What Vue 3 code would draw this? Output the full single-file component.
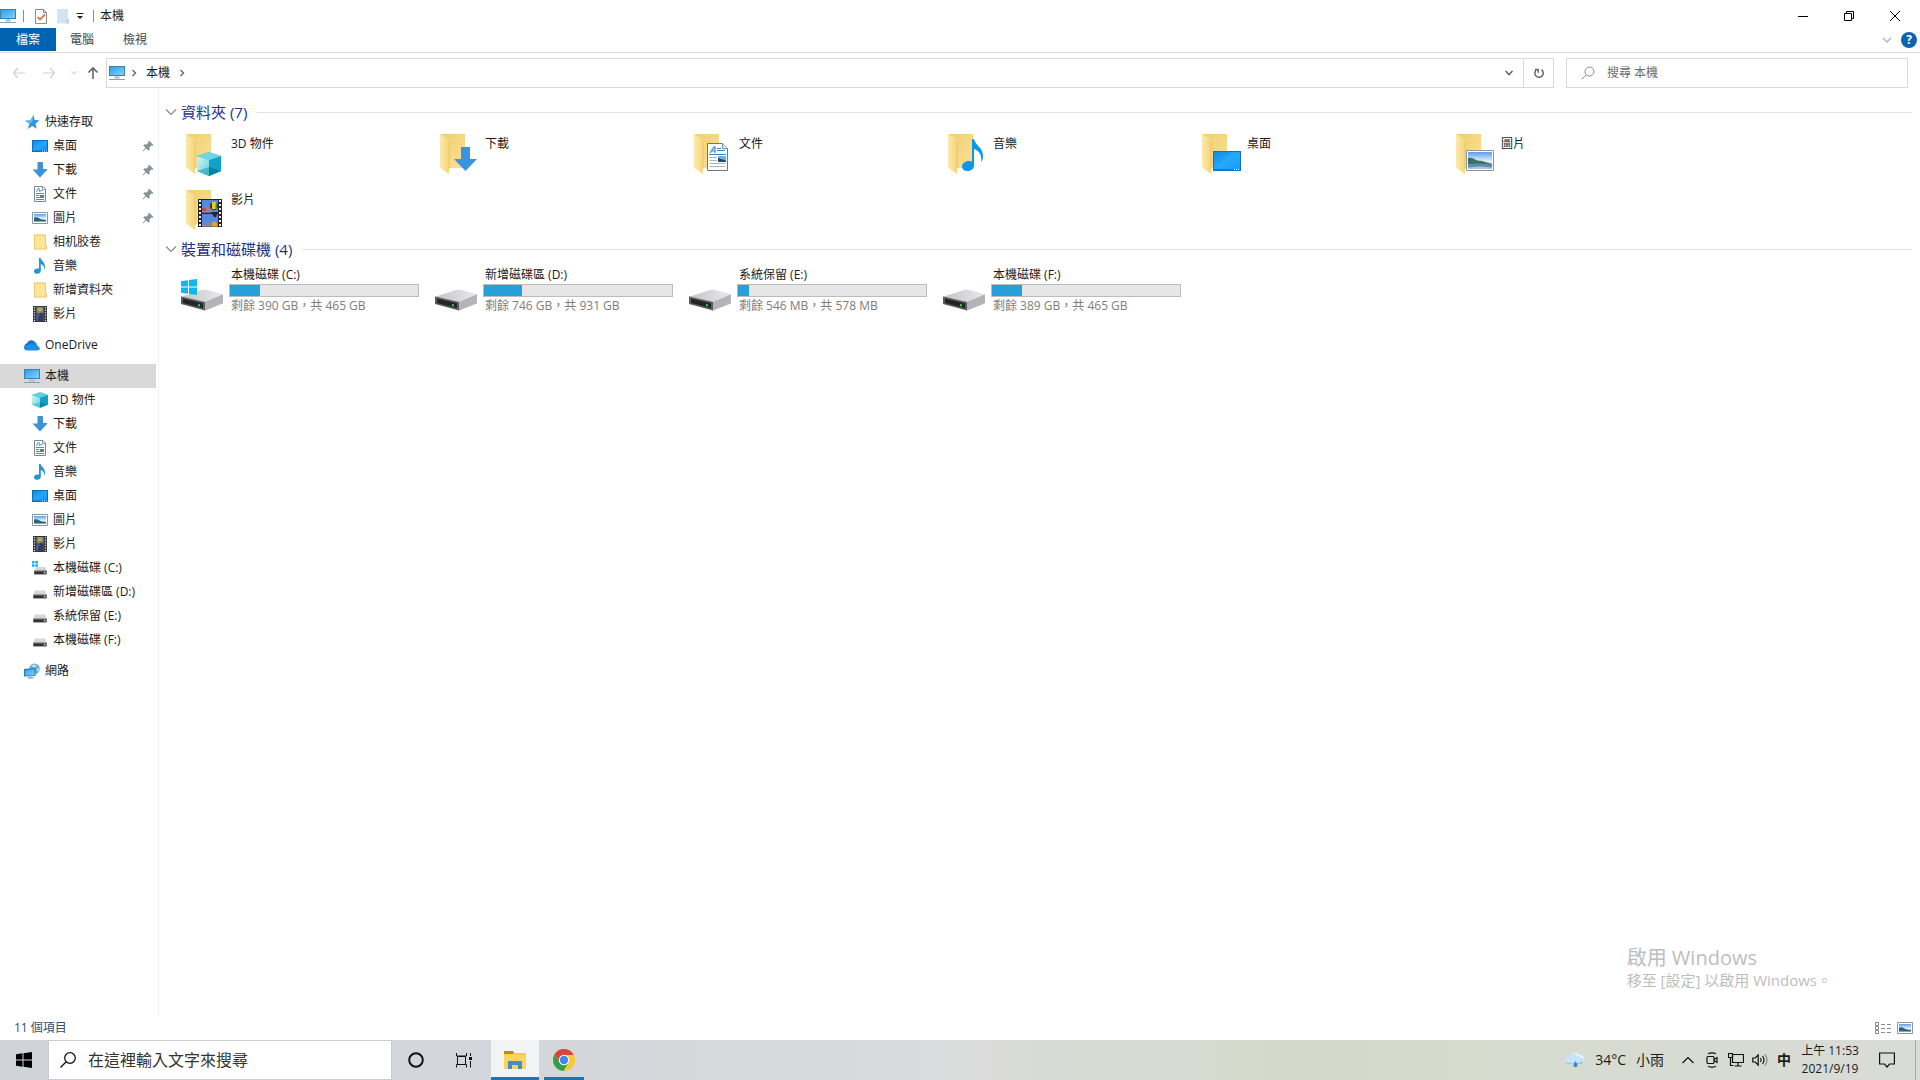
<template>
  <div class="desktop">
    <svg class="sprite" aria-hidden="true">
      <defs>
        <linearGradient id="g-screen" x1="0" y1="0" x2="1" y2="1">
          <stop offset="0" stop-color="#2f9fe8" />
          <stop offset="1" stop-color="#7fd3fb" />
        </linearGradient>
        <linearGradient id="g-desk" x1="0" y1="0" x2="1" y2="1">
          <stop offset="0" stop-color="#1289e6" />
          <stop offset="0.5" stop-color="#22a7fb" />
          <stop offset="1" stop-color="#0d93f2" />
        </linearGradient>
        <linearGradient id="g-folder" x1="0" y1="0" x2="1" y2="1">
          <stop offset="0" stop-color="#f0cf70" />
          <stop offset="1" stop-color="#fce196" />
        </linearGradient>
        <linearGradient id="g-flap" x1="0" y1="0" x2="1" y2="0">
          <stop offset="0" stop-color="#fde9a9" />
          <stop offset="1" stop-color="#f6d67c" />
        </linearGradient>
        <linearGradient id="g-drive" x1="0" y1="0" x2="1" y2="0">
          <stop offset="0" stop-color="#c4c4c6" />
          <stop offset="1" stop-color="#e9e9eb" />
        </linearGradient>
        <linearGradient id="g-sky" x1="0" y1="0" x2="0" y2="1">
          <stop offset="0" stop-color="#5d9ce6" />
          <stop offset="0.55" stop-color="#e3f2fb" />
          <stop offset="1" stop-color="#6d9fb5" />
        </linearGradient>
        <linearGradient id="g-cube" x1="0" y1="0" x2="1" y2="1">
          <stop offset="0" stop-color="#d3f5f5" />
          <stop offset="1" stop-color="#63d2dd" />
        </linearGradient>
        <linearGradient id="g-cloud" x1="0" y1="0" x2="1" y2="1">
          <stop offset="0" stop-color="#0a5cb5" />
          <stop offset="1" stop-color="#2aa6ee" />
        </linearGradient>
      </defs>

      <symbol id="pc" viewBox="0 0 16 16">
        <path d="M0 1h16v10H0z" fill="#3c7fae" />
        <path d="M1 2h14v8H1z" fill="url(#g-screen)" />
        <path d="M6 11h4v2H6z" fill="#b9d4e6" />
        <path d="M0 14h16v1H0z" fill="#8aa0b0" />
        <path d="M5 12.5h6v.8H5z" fill="#7fa9c6" />
      </symbol>
      <symbol id="star" viewBox="0 0 16 16">
        <path d="M9.500 1l1 4.700 5 .8-4 3 1.200 5.200-4.400-2.700-4.600 3 1.800-5L1 6.800l5.400-.5z" fill="#2f96dc" />
        <path d="M9.500 1L6.400 6.300 1 6.800 5.500 10l3-2.500z" fill="#66b9ee" />
      </symbol>
      <symbol id="desktop" viewBox="0 0 16 16">
        <path d="M0 2h16v12H0z" fill="#0c6fb8" />
        <path d="M1 3h14v9.500H1z" fill="url(#g-desk)" />
        <path d="M10 12.500h1v1h-1zM12 12.500h1v1h-1zM14 12.500h1v1h-1z" fill="#d7efff" />
      </symbol>
      <symbol id="download" viewBox="0 0 16 16">
        <path d="M5.500 .5h5v7h5L8 15.500 .5 7.500h5z" fill="#3a93d9" />
        <path d="M5.500 .5h5v7h4.500" fill="none" stroke="#2775b6" stroke-width=".7" />
      </symbol>
      <symbol id="document" viewBox="0 0 16 16">
        <path d="M2.500 .5h8.500l2.500 2.500v12.500h-11z" fill="#fff" stroke="#7c8791" />
        <path d="M10.500 .5v3h3" fill="none" stroke="#7c8791" stroke-width=".8" />
        <path d="M4.500 6l1.500-3.500h1L8 6M8.500 4.500h2M4 7.500h8M4 9.500h3M4 11.500h8M4 13.500h8" fill="none" stroke="#3597cf" />
        <path d="M8 9h4v2H8z" fill="#2b8ac4" />
      </symbol>
      <symbol id="picture" viewBox="0 0 16 16">
        <path d="M.5 2.500h15v11H.5z" fill="#fff" stroke="#8b959d" />
        <path d="M2 4h12v8H2z" fill="url(#g-sky)" />
        <path d="M2 7.500q3-1 5 .8t7 1.700v1H2z" fill="#2f6272" />
      </symbol>
      <symbol id="folder" viewBox="0 0 16 16">
        <path d="M2 .5h12v11h1v4H2z" fill="#f2d47a" />
        <path d="M2.500 1h11v10.500h1V15h-12z" fill="#fbe59a" stroke="#ecca6c" stroke-width=".8" />
      </symbol>
      <symbol id="music" viewBox="0 0 16 16">
        <path d="M7 0h1.600c.5 3 4.700 4 4.400 9.500-.1 1-.4 1.700-.8 2.300.3-3.300-1-5-3.400-5.800v6.800c0 1.700-1.700 3-3.600 3S2 14.700 2 13.200s1.600-2.700 3.300-2.700c.7 0 1.300.1 1.700.3z" fill="#1f96d6" />
      </symbol>
      <symbol id="video" viewBox="0 0 16 16">
        <path d="M1 0h14v16H1z" fill="#34343a" />
        <path d="M4.500 1h7v6.500h-7z" fill="#7c8a78" />
        <path d="M4.500 8.500h7V15h-7z" fill="#4a68ae" />
        <path d="M6 2h4v3H6zM8 10h3v2H8z" fill="#c9a64d" />
        <path d="M6 12l3-6 2 3v6H6z" fill="#333c58" />
        <path d="M2.500 1v15M13.500 1v15" stroke="#d9d9d9" stroke-width="1.300" stroke-dasharray="1.300 1.300" />
      </symbol>
      <symbol id="cloud" viewBox="0 0 16 16">
        <path d="M3.500 13A3.500 3.500 0 0 1 3 6.200 4.600 4.600 0 0 1 11 5a4 4 0 0 1 2 3.200 2.500 2.500 0 0 1 .4 4.800z" fill="url(#g-cloud)" />
        <path d="M3 13.500a3 3 0 0 1-2.800-4.500l6.300-2L16 11q-.2 2.500-3 2.500z" fill="#1e90e6" />
      </symbol>
      <symbol id="cube" viewBox="0 0 16 16">
        <path d="M8 .3l8 2.700v9.500l-8 3.200-8-3.200V3z" fill="#25b5cf" />
        <path d="M0 3l8 2.700v10L0 12.500z" fill="url(#g-cube)" />
        <path d="M8 5.700L16 3v9.500l-8 3.200z" fill="#11a0c4" />
        <path d="M0 3L8 .3 16 3 8 5.700z" fill="#5ccfe0" />
        <path d="M8 15.700l8-3.200-8-2z" fill="#067a93" opacity=".6" />
        <path d="M0 12.500l8-2v5.200z" fill="#3fb9c8" opacity=".6" />
      </symbol>
      <symbol id="drive" viewBox="0 0 16 16">
        <path d="M3 6.500h10l1.500 4h-13z" fill="#d5d5d7" />
        <path d="M1.200 10.500h13.600v4H1.200z" fill="#55585b" />
        <path d="M2 12h9v2H2z" fill="#303234" />
        <path d="M12.300 12h1v1h-1z" fill="#d5ffd5" />
      </symbol>
      <symbol id="system-drive" viewBox="0 0 16 16">
        <path d="M4 7h9l1.500 4h-12z" fill="#d5d5d7" />
        <path d="M2 10.500h12.800v4H2z" fill="#55585b" />
        <path d="M3 12h8v2H3z" fill="#303234" />
        <path d="M12.300 12h1v1h-1z" fill="#d5ffd5" />
        <path d="M0 1h2.500v2.500H0zM3.200 1H6v2.500H3.200zM0 4.200h2.500v2.500H0zM3.200 4.200H6v2.500H3.200z" fill="#19b3e6" />
      </symbol>
      <symbol id="network" viewBox="0 0 16 16">
        <circle cx="10.500" cy="5.800" r="5.300" fill="#6fa9cf" />
        <path d="M7 3q3-2.500 6-.5-1 2.500-3 2zM12 6l3.500-1-1 4z" fill="#b5d9ec" />
        <path d="M0 6l11.500-1v8L0 13.500z" fill="#2a78ab" />
        <path d="M1 7l9.500-.8v6L1 12.500z" fill="url(#g-screen)" />
        <path d="M3 15.500h7v-.8l-3-.9H5z" fill="#7ca7c2" />
      </symbol>
      <symbol id="pin" viewBox="0 0 12 12">
        <path d="M7 .5L11.500 5l-1 .8-1-.3-2 2 .3 2L6.500 10.700 4.200 8.400 1 11.500 .5 11l3-3.300L1.300 5.500 2.500 4.200l2 .3 2-2-.3-1z" fill="#87929c" />
      </symbol>

      <symbol id="tile-folder" viewBox="0 0 48 48">
        <path d="M5 4h25v34H12z" fill="url(#g-folder)" />
        <path d="M5 4l7 4q2 1 2 4v32l-7-5q-2-1-2-3z" fill="url(#g-flap)" />
        <path d="M14 12v27" stroke="#e7c263" stroke-width=".8" />
      </symbol>
      <symbol id="tile-cube" viewBox="0 0 48 48">
        <path d="M28 22l12 4v15l-12 5-12-5V26z" fill="#2cb9d2" />
        <path d="M16 26l12 4v16l-12-5z" fill="url(#g-cube)" />
        <path d="M28 30l12-4v15l-12 5z" fill="#13a2c6" />
        <path d="M16 26l12-4 12 4-12 4z" fill="#6ed5e4" />
        <path d="M28 46l12-5-12-4z" fill="#057590" opacity=".7" />
        <path d="M16 41l12-4v9z" fill="#2fa9b9" opacity=".7" />
      </symbol>
      <symbol id="tile-download" viewBox="0 0 48 48">
        <path d="M26 17h9v12h7L30.500 41 19 29h7z" fill="#3a93e0" />
      </symbol>
      <symbol id="tile-document" viewBox="0 0 48 48">
        <path d="M18.500 13.500h15l5 5v22h-20z" fill="#fff" stroke="#6b7681" />
        <path d="M33.500 13.500v5h5" fill="#e5e9ed" stroke="#6b7681" stroke-width=".8" />
        <path d="M21 23l4-6h1v6M23 21h3M28 18.500h4M28 20.500h8M20 24.500h17" fill="none" stroke="#2b86d8" stroke-width="1.200" />
        <path d="M20.500 27.500H28M20.500 30.500H28M20.500 33.500h16M20.500 36.500h16" stroke="#b1b6bc" stroke-width="1.200" />
        <path d="M29 26h8v6h-8z" fill="#71b1e5" />
        <path d="M29 28l8 2.500V32h-8z" fill="#244d68" />
      </symbol>
      <symbol id="tile-music" viewBox="0 0 48 48">
        <path d="M29 9h2c1 6 9 8 9 17 0 3-1 5-2 6 1-6-1-11-7-13v16c0 4-3 6-7 6-3 0-5-2-5-4.500 0-3 3-5.500 7-5.500 1 0 2 .2 3 .6z" fill="#0e96ea" />
      </symbol>
      <symbol id="tile-desktop" viewBox="0 0 48 48">
        <path d="M16 21h28v20H16z" fill="#1273bd" />
        <path d="M17 22h26v17H17z" fill="url(#g-desk)" />
        <path d="M17 39L34 22h9v17z" fill="#29adff" opacity=".4" />
        <path d="M17 39h26v1.500H17z" fill="#0d7ecf" />
        <path d="M37 39h1v1h-1zM39 39h1v1h-1zM41 39h1v1h-1z" fill="#fff" />
      </symbol>
      <symbol id="tile-picture" viewBox="0 0 48 48">
        <path d="M15.500 20.500h27v20h-27z" fill="#fff" stroke="#8f979e" />
        <path d="M17 22h24v17H17z" fill="url(#g-sky)" />
        <path d="M17 28q3-1 6 1t8 2l10 3v1H17z" fill="#3c6f5e" />
        <path d="M17 34q12-1 24 .5V39H17z" fill="#5e8db0" />
        <path d="M17 37.500l12-1 12 1V39H17z" fill="#a9cbe0" />
      </symbol>
      <symbol id="tile-video" viewBox="0 0 48 48">
        <path d="M17 13h24v28H17z" fill="#26262a" />
        <path d="M21 14h16v12.500H21zM21 28h16v12.500H21z" fill="#5487df" />
        <path d="M21 22l6-2 5 3v3.500H21zM21 38q5-3 9-1v3.500h-9z" fill="#8b82a6" />
        <circle cx="33" cy="20" r="4" fill="#3d3a12" />
        <path d="M31 16h4v7h-4z" fill="#f2ca24" />
        <path d="M34.500 17h1.500v6h-1.500z" fill="#3b9a3c" />
        <path d="M21 22h4v3h-4z" fill="#c14a63" />
        <path d="M30 26h7l-2 5h-2z" fill="#25263c" />
        <path d="M31 37l2-2 3 2v3.500h-5z" fill="#e4a722" />
        <path d="M19 14v27M39 14v27" stroke="#f2f2f2" stroke-width="2" stroke-dasharray="2 2" />
      </symbol>
      <symbol id="tile-drive" viewBox="0 0 48 48">
        <path d="M0 30l22-7q1-.4 3 0l17 4.500v9L24 43.500z" fill="#c5c5c8" />
        <path d="M0 30l22-7q1-.4 3 0l17 4.500-18 7.500z" fill="url(#g-drive)" />
        <path d="M24 35l18-7.500V36l-18 7.500z" fill="#b4b4b8" />
        <path d="M0 29.500L24 35v8.500L0 37z" fill="#5b5d5f" />
        <path d="M2 31.500l20 4.800v4.900L2 36z" fill="#232526" />
        <path d="M17 37l2 .5v2l-2-.5z" fill="#45d24f" />
      </symbol>
      <symbol id="tile-windows" viewBox="0 0 48 48">
        <path d="M0 14.200l7-1v6.300H0zM8 13l8-1v7.500H8zM0 20.500h7v6.300l-7-1zM8 20.500h8V28l-8-1z" fill="#10b5ea" />
      </symbol>
    </svg>

    <main class="window">
      <header class="titlebar">
        <svg class="icon"><use href="#pc" /></svg>
        <span class="separator"></span>
        <button type="button" class="quick" aria-label="內容">
          <svg class="icon" viewBox="0 0 16 16" fill="none">
            <path d="M2.500 1.500h8l3 3v11h-11z" fill="#fff" stroke="#8c8c8c" />
            <path d="M10.500 1.500v3h3" stroke="#8c8c8c" />
            <path d="M4.500 9l2.500 2.500 5-5" stroke="#e07a4a" stroke-width="1.800" />
          </svg>
        </button>
        <button type="button" class="quick" aria-label="新增資料夾">
          <svg class="icon" viewBox="0 0 16 16">
            <path d="M2 1h11v10h1v4.500H2z" fill="#d5e3f0" />
            <path d="M11 11h3v4.500h-3z" fill="#c3d5e6" />
          </svg>
        </button>
        <button type="button" class="quick narrow" aria-label="自訂快速存取工具列">
          <svg class="caret" viewBox="0 0 8 8"><path d="M.5 1h7v1h-7zM1 4h6L4 7z" fill="#222" /></svg>
        </button>
        <span class="separator"></span>
        <h1 class="title">本機</h1>
        <div class="window-buttons">
          <button type="button" aria-label="最小化">
            <svg viewBox="0 0 10 10"><path d="M0 5.500h10" /></svg>
          </button>
          <button type="button" aria-label="往下還原">
            <svg viewBox="0 0 10 10"><path d="M.5 2.500h7v7h-7zM2.500 2.500v-2h7v7h-2" /></svg>
          </button>
          <button type="button" aria-label="關閉">
            <svg viewBox="0 0 10 10"><path d="M0 0l10 10M10 0L0 10" /></svg>
          </button>
        </div>
      </header>

      <nav class="ribbon">
        <button type="button" class="tab file">檔案</button>
        <button type="button" class="tab">電腦</button>
        <button type="button" class="tab">檢視</button>
        <div class="ribbon-end">
          <button type="button" aria-label="展開功能區">
            <svg class="chevron" viewBox="0 0 10 10"><path d="M1 3l4 4 4-4" stroke="#b3b3b3" /></svg>
          </button>
          <button type="button" class="help" aria-label="說明">?</button>
        </div>
      </nav>

      <div class="address-row">
        <div class="history">
          <button type="button" aria-label="上一頁">
            <svg viewBox="0 0 14 14"><path d="M13 7H1.500M6 2L1.500 7 6 12" stroke="#cfcfcf" /></svg>
          </button>
          <button type="button" aria-label="下一頁">
            <svg viewBox="0 0 14 14"><path d="M1 7h11.500M8 2l4.500 5L8 12" stroke="#cfcfcf" /></svg>
          </button>
          <button type="button" class="slim" aria-label="最近的位置">
            <svg viewBox="0 0 14 14"><path d="M4.500 5.500L7 8l2.500-2.500" stroke="#d5d5d5" /></svg>
          </button>
          <button type="button" class="slim" aria-label="上一層">
            <svg viewBox="0 0 14 14"><path d="M7 13V2M2.500 6.500L7 2l4.500 4.500" stroke="#666" stroke-width="1.600" /></svg>
          </button>
        </div>
        <div class="address">
          <svg class="icon"><use href="#pc" /></svg>
          <svg class="chevron" viewBox="0 0 10 10"><path d="M3.500 2l3 3-3 3" /></svg>
          <a href="#" class="crumb">本機</a>
          <svg class="chevron" viewBox="0 0 10 10"><path d="M3.500 2l3 3-3 3" /></svg>
          <button type="button" class="address-drop" aria-label="先前的位置">
            <svg class="chevron" viewBox="0 0 10 10"><path d="M1.500 3L5 6.500 8.500 3" stroke-width="1.600" /></svg>
          </button>
          <button type="button" class="refresh" aria-label="重新整理">
            <svg viewBox="0 0 12 12">
              <path d="M3 3.200A4.200 4.200 0 1 0 8.500 2.700M2 2.500h3.200v3.200" fill="none" stroke="#666" stroke-width="1.500" />
            </svg>
          </button>
        </div>
        <label class="search">
          <svg viewBox="0 0 14 14">
            <circle cx="8.500" cy="5.500" r="4.500" />
            <path d="M5.200 8.800L.8 13.200" />
          </svg>
          <input type="text" placeholder="搜尋 本機" aria-label="搜尋 本機" />
        </label>
      </div>

      <div class="body">
        <aside class="sidebar">
          <ul v-for="(group, i) in tree" :key="i" class="tree">
            <li v-for="(node, n) in group" :key="n">
              <a href="#" class="node" :class="{ child: n > 0, selected: node.selected }">
                <svg class="icon"><use :href="'#' + node.icon" /></svg>
                <span>{{ node.label }}</span>
                <svg v-if="node.pinned" class="pin"><use href="#pin" /></svg>
              </a>
            </li>
          </ul>
        </aside>

        <section class="content">
          <h2 class="group-title">
            <svg class="chevron" viewBox="0 0 12 12"><path d="M1 3.500l5 5 5-5" /></svg>
            資料夾 (7)
          </h2>
          <div class="tiles">
            <a v-for="folder in folders" :key="folder.label" href="#" class="tile">
              <svg class="tile-icon">
                <use href="#tile-folder" />
                <use :href="'#tile-' + folder.icon" />
              </svg>
              <span class="tile-label">{{ folder.label }}</span>
            </a>
          </div>

          <h2 class="group-title">
            <svg class="chevron" viewBox="0 0 12 12"><path d="M1 3.500l5 5 5-5" /></svg>
            裝置和磁碟機 (4)
          </h2>
          <div class="tiles">
            <a v-for="drive in drives" :key="drive.label" href="#" class="tile">
              <svg class="tile-icon">
                <use href="#tile-drive" />
                <use v-if="drive.system" href="#tile-windows" />
              </svg>
              <span class="drive">
                <span class="drive-name">{{ drive.label }}</span>
                <span class="usage"><span class="used" :style="{ width: drive.used + '%' }"></span></span>
                <span class="drive-free">{{ drive.free }}</span>
              </span>
            </a>
          </div>
        </section>
      </div>

      <footer class="statusbar">
        <span>11 個項目</span>
        <div class="views">
          <button type="button" aria-label="詳細資料">
            <svg class="icon" viewBox="0 0 16 16" fill="none" stroke="#8a8a8a">
              <path d="M.5 2.500h3v3h-3zM.5 6.500h3v3h-3zM.5 10.500h3v3h-3z" />
              <path d="M6 4.500h4M6 8.500h4M6 12.500h4M12 4.500h4M12 8.500h4M12 12.500h4" />
            </svg>
          </button>
          <button type="button" aria-label="大圖示"><svg class="icon"><use href="#picture" /></svg></button>
        </div>
      </footer>

      <div class="watermark">
        <p class="watermark-title">啟用 Windows</p>
        <p>移至 [設定] 以啟用 Windows。</p>
      </div>
    </main>

    <footer class="taskbar">
      <button type="button" class="task start" aria-label="開始">
        <svg viewBox="0 0 16 16">
          <path d="M0 2.200l6.500-.9v6.200H0zM7.500 1.200L16 0v7.500H7.500zM0 8.500h6.500v6.200l-6.500-.9zM7.500 8.500H16V16l-8.500-1.200z" fill="#000" />
        </svg>
      </button>
      <label class="task-search">
        <svg viewBox="0 0 16 16">
          <circle cx="10" cy="6" r="5.300" />
          <path d="M6.200 9.800L.5 15.500" />
        </svg>
        <input type="text" placeholder="在這裡輸入文字來搜尋" aria-label="在這裡輸入文字來搜尋" />
      </label>
      <button type="button" class="task" aria-label="Cortana">
        <svg viewBox="0 0 16 16"><circle cx="8" cy="8" r="6.800" fill="none" stroke="#111" stroke-width="2" /></svg>
      </button>
      <button type="button" class="task" aria-label="工作檢視">
        <svg viewBox="0 0 16 16" fill="none" stroke="#111">
          <path d="M.5 1v3h10V1M.5 15.500v-3h10v3M1.500 4.500h8v8h-8zM14.500 1v3M14.500 9v6.500" />
          <path d="M13 5h3v3h-3z" fill="#111" stroke="none" />
        </svg>
      </button>
      <button type="button" class="task active" aria-label="檔案總管">
        <svg class="app" viewBox="0 0 22 20">
          <path d="M0 1.500Q0 1 .5 1H8l2 2h11q1 0 1 1v14H0z" fill="#f7c948" />
          <path d="M0 1.500Q0 1 .5 1H9l1 1.500-1.500 1.500H0z" fill="#b98d1d" />
          <path d="M0 5h22v14H0z" fill="#fbd560" />
          <path d="M4 19v-7q0-1 1-1h12q1 0 1 1v7h-4v-4H8v4z" fill="#3f8fc9" />
        </svg>
      </button>
      <button type="button" class="task running" aria-label="Google Chrome">
        <svg class="app" viewBox="0 0 22 22">
          <circle cx="11" cy="11" r="11" fill="#fcc934" />
          <path d="M11 6h9.800a11 11 0 0 0-19.300-.5l5 8z" fill="#d8453a" />
          <path d="M1.500 5.500A11 11 0 0 0 10.500 22l5-8.500H6.300z" fill="#2f9e50" />
          <circle cx="11" cy="11" r="5.200" fill="#fff" />
          <circle cx="11" cy="11" r="4.200" fill="#4285f4" />
        </svg>
      </button>

      <div class="tray">
        <button type="button" class="weather">
          <svg viewBox="0 0 20 16">
            <path d="M4 12a4 4 0 0 1 0-8 5.500 5.500 0 0 1 10-1 4.600 4.600 0 0 1 2 9z" fill="#c5e4fa" />
            <path d="M8 1q4-1 6 2 4 0 5 4-5-3-11-6z" fill="#eff8ff" />
            <path d="M.5 10q7 3 18-.5-1 2.500-3 2.500H4q-2.500 0-3.500-2z" fill="#8fc3ee" />
            <path d="M10.500 9q2 3 2 4.200a2 2 0 0 1-4 0Q8.500 12 10.500 9z" fill="#4587c4" />
          </svg>
          <span>34°C</span><span>小雨</span>
        </button>
        <button type="button" class="tray-icon" aria-label="顯示隱藏的圖示">
          <svg viewBox="0 0 16 16"><path d="M2.500 11L8 5.500l5.500 5.500" /></svg>
        </button>
        <button type="button" class="tray-icon" aria-label="立即開會">
          <svg viewBox="0 0 16 16">
            <rect x="3" y="4.500" width="7" height="7" rx="1" />
            <path d="M10 7.500l3-2v5l-3-2M4 1.800q4-2 8 0M4 14.200q4 2 8 0" />
          </svg>
        </button>
        <button type="button" class="tray-icon" aria-label="網路">
          <svg viewBox="0 0 16 16">
            <path d="M4.500 2.500h11v8h-11zM10 10.500v3M6.500 14h7" />
            <path d="M.5 1.500h4v4h-4zM2.500 5.500v8h3" />
          </svg>
        </button>
        <button type="button" class="tray-icon" aria-label="喇叭">
          <svg viewBox="0 0 16 16">
            <path d="M.8 6h2.400l3-3v10l-3-3H.8zM8.500 6q1.500 2 0 4M10.500 4q3 4 0 8" />
            <path d="M12.800 2.500q4.500 5.500 0 11" stroke="#888" />
          </svg>
        </button>
        <button type="button" class="ime" aria-label="輸入法">中</button>
        <button type="button" class="clock"><span>上午 11:53</span><span>2021/9/19</span></button>
        <button type="button" class="notice" aria-label="通知">
          <svg viewBox="0 0 16 16"><path d="M.6 1h14.800v11h-4.900l-2.500 3-2.500-3H.6z" /></svg>
        </button>
        <button type="button" class="peek" aria-label="顯示桌面"></button>
      </div>
    </footer>
  </div>
</template>

<script setup>
const tree = [
  [
    { icon: "star", label: "快速存取" },
    { icon: "desktop", label: "桌面", pinned: true },
    { icon: "download", label: "下載", pinned: true },
    { icon: "document", label: "文件", pinned: true },
    { icon: "picture", label: "圖片", pinned: true },
    { icon: "folder", label: "相机胶卷" },
    { icon: "music", label: "音樂" },
    { icon: "folder", label: "新增資料夾" },
    { icon: "video", label: "影片" },
  ],
  [{ icon: "cloud", label: "OneDrive" }],
  [
    { icon: "pc", label: "本機", selected: true },
    { icon: "cube", label: "3D 物件" },
    { icon: "download", label: "下載" },
    { icon: "document", label: "文件" },
    { icon: "music", label: "音樂" },
    { icon: "desktop", label: "桌面" },
    { icon: "picture", label: "圖片" },
    { icon: "video", label: "影片" },
    { icon: "system-drive", label: "本機磁碟 (C:)" },
    { icon: "drive", label: "新增磁碟區 (D:)" },
    { icon: "drive", label: "系統保留 (E:)" },
    { icon: "drive", label: "本機磁碟 (F:)" },
  ],
  [{ icon: "network", label: "網路" }],
]

const folders = [
  { icon: "cube", label: "3D 物件" },
  { icon: "download", label: "下載" },
  { icon: "document", label: "文件" },
  { icon: "music", label: "音樂" },
  { icon: "desktop", label: "桌面" },
  { icon: "picture", label: "圖片" },
  { icon: "video", label: "影片" },
]

const drives = [
  { label: "本機磁碟 (C:)", used: 16, free: "剩餘 390 GB，共 465 GB", system: true },
  { label: "新增磁碟區 (D:)", used: 20, free: "剩餘 746 GB，共 931 GB" },
  { label: "系統保留 (E:)", used: 6, free: "剩餘 546 MB，共 578 MB" },
  { label: "本機磁碟 (F:)", used: 16, free: "剩餘 389 GB，共 465 GB" },
]
</script>

<style>
body {
  margin: 0;
  background: #fff;
}
</style>

<style scoped>
.desktop {
  min-height: 100vh;
  display: flex;
  flex-direction: column;
  background: #fff;
  color: #1b1b1b;
  font-family: "Open Sans", "Noto Sans CJK TC", sans-serif;
  font-size: 12px;
  line-height: 16px;
}

.sprite {
  position: absolute;
  width: 0;
  height: 0;
}

button {
  display: flex;
  align-items: center;
  justify-content: center;
  margin: 0;
  padding: 0;
  border: 0;
  background: none;
  color: inherit;
  font: inherit;
}

input {
  flex: 1;
  min-width: 0;
  padding: 0;
  border: 0;
  outline: 0;
  background: none;
  font: inherit;
}

a {
  color: inherit;
  text-decoration: none;
}

.icon {
  flex: none;
  width: 16px;
  height: 16px;
}

.chevron {
  flex: none;
  width: 10px;
  height: 10px;
  fill: none;
  stroke: #666;
  stroke-width: 1.4;
}

.window {
  position: relative;
  flex: 1;
  display: flex;
  flex-direction: column;
}

/* title bar */
.titlebar {
  height: 28px;
  padding-top: 4px;
  box-sizing: border-box;
  display: flex;
  align-items: center;
}

.separator {
  width: 1px;
  height: 12px;
  margin: 0 6px 0 7px;
  background: #8c8c8c;
}

.quick {
  width: 22px;
}

.quick.narrow {
  width: 12px;
}

.caret {
  width: 8px;
  height: 8px;
}

.title {
  margin: 0;
  font-size: 12px;
  font-weight: 400;
}

.window-buttons {
  display: flex;
  margin-left: auto;
  padding-right: 2px;
}

.window-buttons button {
  width: 46px;
  height: 24px;
}

.window-buttons svg {
  width: 10px;
  height: 10px;
  fill: none;
  stroke: #000;
}

/* ribbon */
.ribbon {
  height: 24px;
  display: flex;
  border-bottom: 1px solid #dadbdc;
}

.tab {
  height: 23px;
  padding: 0 15px 0 14px;
  color: #444;
}

.tab.file {
  padding: 0 16px;
  background: #0063b1;
  color: #fff;
}

.ribbon-end {
  display: flex;
  align-items: center;
  gap: 9px;
  margin-left: auto;
  padding-right: 3px;
}

.help {
  width: 16px;
  height: 16px;
  border-radius: 50%;
  background: #0f64ad;
  color: #fff;
  font-weight: 700;
}

/* address bar */
.address-row {
  display: flex;
  align-items: center;
  padding: 5px 12px 0 0;
}

.history {
  display: flex;
  width: 106px;
  padding-left: 4px;
  box-sizing: border-box;
}

.history button {
  width: 30px;
}

.history .slim {
  width: 19px;
}

.history svg {
  width: 14px;
  height: 14px;
  fill: none;
  stroke-width: 1.2;
}

.address {
  flex: 1;
  height: 30px;
  padding-left: 2px;
  box-sizing: border-box;
  display: flex;
  align-items: center;
  gap: 4px;
  border: 1px solid #d9d9d9;
}

.crumb {
  margin: 0 3px;
}

.address-drop {
  width: 28px;
  height: 28px;
  margin-left: auto;
}

.refresh {
  width: 30px;
  height: 28px;
  margin-left: -4px;
  border-left: 1px solid #d9d9d9;
}

.refresh svg {
  width: 12px;
  height: 12px;
}

.search {
  width: 342px;
  height: 30px;
  margin-left: 12px;
  padding: 0 14px;
  box-sizing: border-box;
  display: flex;
  align-items: center;
  gap: 12px;
  border: 1px solid #d9d9d9;
}

.search svg {
  width: 14px;
  height: 14px;
  fill: none;
  stroke: #8a8a8a;
}

.search input::placeholder {
  color: #6d6d6d;
  opacity: 1;
}

/* navigation pane */
.body {
  flex: 1;
  display: flex;
}

.sidebar {
  width: 159px;
  padding-top: 22px;
  box-sizing: border-box;
  border-right: 1px solid #f3f3f3;
}

.tree {
  margin: 0 0 7px;
  padding: 0;
  list-style: none;
}

.node {
  display: flex;
  align-items: center;
  gap: 5px;
  height: 24px;
  margin-right: 2px;
  padding: 0 2px 0 24px;
  white-space: nowrap;
}

.node.child {
  padding-left: 32px;
}

.node.selected {
  background: #d9d9d9;
}

.pin {
  width: 12px;
  height: 12px;
  margin-left: auto;
}

/* file list */
.content {
  flex: 1;
  padding: 13px 8px 0 6px;
}

.group-title {
  display: flex;
  align-items: center;
  gap: 4px;
  height: 22px;
  margin: 0 0 7px;
  color: #1e3287;
  font-size: 15px;
  font-weight: 400;
}

.group-title .chevron {
  width: 12px;
  height: 12px;
  stroke: #8a8a8a;
  stroke-width: 1.2;
}

.group-title::after {
  content: "";
  flex: 1;
  height: 1px;
  margin-left: 6px;
  background: #e2e2e2;
}

.tiles {
  display: grid;
  grid-template-columns: repeat(auto-fill, 254px);
  row-gap: 8px;
  margin-bottom: 4px;
  padding-left: 16px;
}

.tile {
  display: flex;
  height: 48px;
}

.tile-icon {
  flex: none;
  width: 48px;
  height: 48px;
}

.tile-label {
  padding: 6px 0 0 2px;
}

.drive {
  display: flex;
  flex-direction: column;
  width: 190px;
}

.drive-name,
.drive-free {
  padding-left: 2px;
}

.drive-free {
  color: #7d7d7d;
}

.usage {
  height: 13px;
  box-sizing: border-box;
  margin: 1px 0;
  border: 1px solid #bcbcbc;
  background: #e6e6e6;
}

.used {
  display: block;
  height: 100%;
  background: #26a0da;
}

.statusbar {
  display: flex;
  align-items: center;
  height: 24px;
  padding: 0 7px 0 14px;
  color: #30506f;
}

.views {
  display: flex;
  gap: 6px;
  margin-left: auto;
}

.watermark {
  position: absolute;
  right: 88px;
  bottom: 50px;
  color: #bdbdbd;
  font-size: 15px;
  line-height: 20px;
}

.watermark p {
  margin: 0;
}

.watermark .watermark-title {
  font-size: 20px;
  line-height: 24px;
}

/* taskbar */
.taskbar {
  display: flex;
  height: 40px;
  background: linear-gradient(90deg, #d0d3d9, #d5d7db 35%, #dadbdb 50%, #d5d9c9 68%, #d8dbd1 85%, #d9dbd7);
}

.task {
  width: 48px;
  border-bottom: 3px solid transparent;
  border-top: 3px solid transparent;
  box-sizing: border-box;
}

.task svg {
  width: 16px;
  height: 16px;
}

.task .app {
  width: 22px;
  height: 22px;
}

.task.active {
  margin-left: 3px;
  background: #f1f3f5;
  border-top-color: #f1f3f5;
  border-bottom-color: #1a75bd;
}

.task.running {
  width: 40px;
  margin-left: 5px;
  border-bottom-color: #1a75bd;
}

.task-search {
  width: 344px;
  padding: 0 11px;
  box-sizing: border-box;
  display: flex;
  align-items: center;
  gap: 12px;
  border: 1px solid #c9cbcf;
  background: #fff;
}

.task-search svg {
  width: 16px;
  height: 16px;
  fill: none;
  stroke: #111;
  stroke-width: 1.3;
}

.task-search input {
  font-size: 16px;
  line-height: 24px;
}

.task-search input::placeholder {
  color: #333;
  opacity: 1;
}

.tray {
  display: flex;
  margin-left: auto;
}

.tray svg {
  width: 16px;
  height: 16px;
  fill: none;
  stroke: #111;
  stroke-width: 1.2;
}

.weather {
  gap: 10px;
  margin-right: 12px;
  font-size: 14px;
}

.tray .weather svg {
  width: 20px;
  height: 16px;
  stroke: none;
}

.tray-icon {
  width: 24px;
}

.ime {
  width: 24px;
  font-size: 14px;
  font-weight: 700;
}

.clock {
  flex-direction: column;
  width: 68px;
  line-height: 18px;
}

.notice {
  width: 46px;
}

.peek {
  width: 5px;
  margin-left: 5px;
  border-left: 1px solid #a9aba8;
}
</style>
